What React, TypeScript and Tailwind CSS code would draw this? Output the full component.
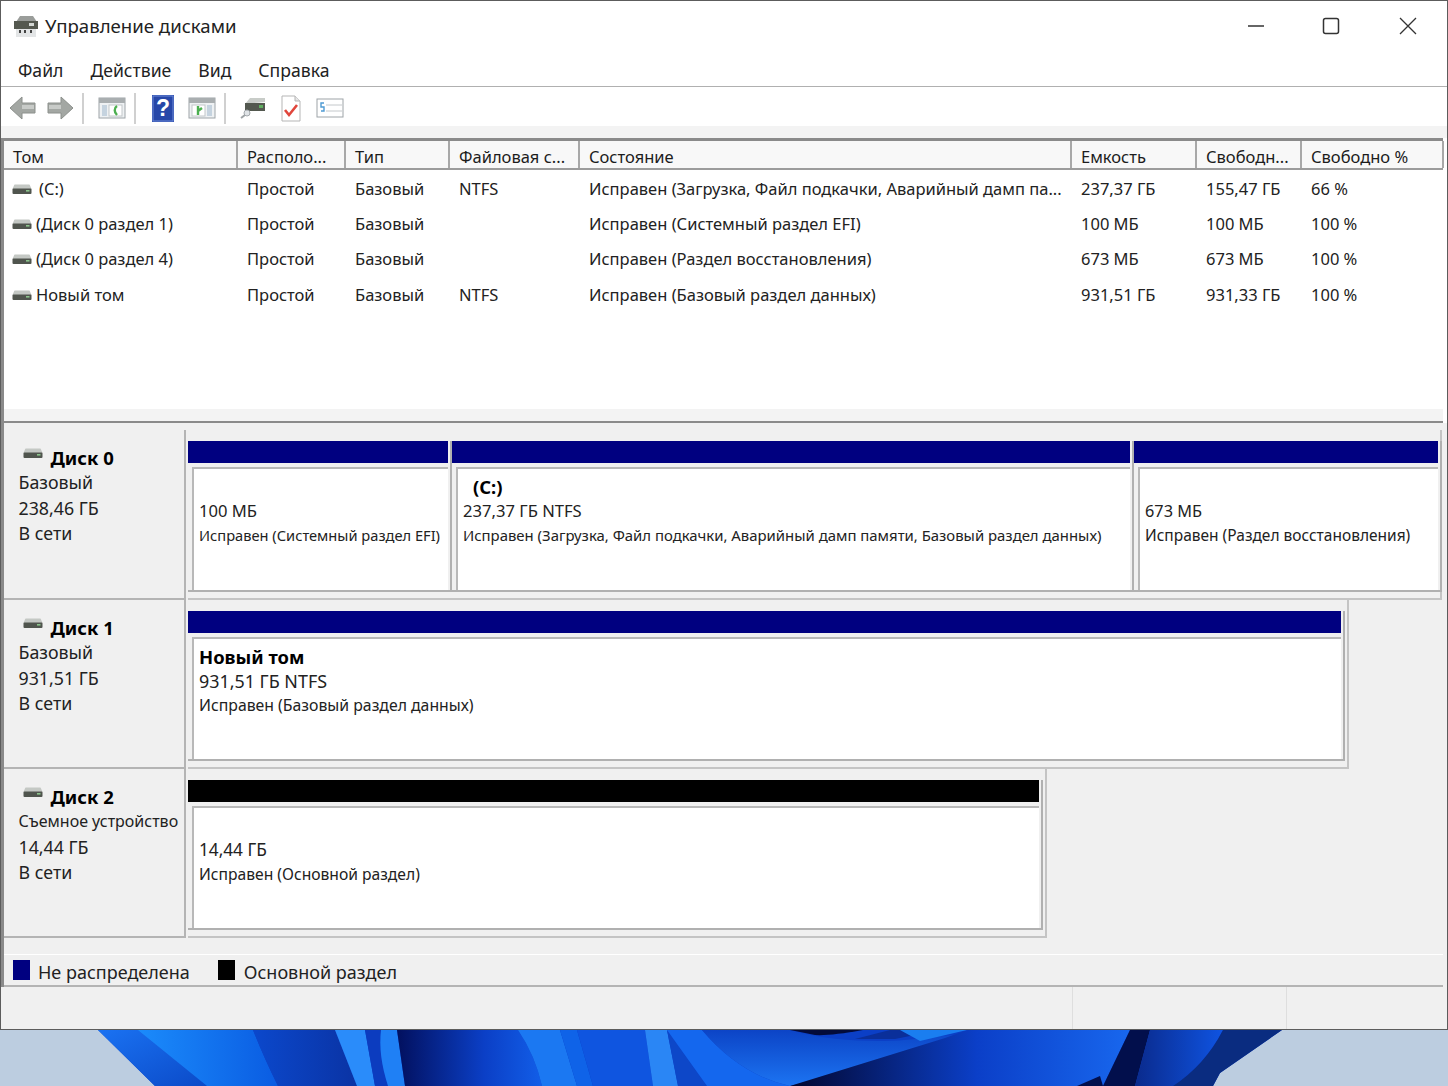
import type { ReactNode } from "react";

const columns = [
  { title: "Том", width: 234 },
  { title: "Располо...", width: 108 },
  { title: "Тип", width: 104 },
  { title: "Файловая с...", width: 130 },
  { title: "Состояние", width: 492 },
  { title: "Емкость", width: 125 },
  { title: "Свободн...", width: 105 },
  { title: "Свободно %", width: 142 },
];

const rows = [
  ["(C:)", "Простой", "Базовый", "NTFS", "Исправен (Загрузка, Файл подкачки, Аварийный дамп па...", "237,37 ГБ", "155,47 ГБ", "66 %"],
  ["(Диск 0 раздел 1)", "Простой", "Базовый", "", "Исправен (Системный раздел EFI)", "100 МБ", "100 МБ", "100 %"],
  ["(Диск 0 раздел 4)", "Простой", "Базовый", "", "Исправен (Раздел восстановления)", "673 МБ", "673 МБ", "100 %"],
  ["Новый том", "Простой", "Базовый", "NTFS", "Исправен (Базовый раздел данных)", "931,51 ГБ", "931,33 ГБ", "100 %"],
];

function DriveIcon() {
  return (
    <svg width="20" height="11" viewBox="0 0 20 11" className="shrink-0">
      <path d="M2 1.5Q2 .5 3 .5h14q1 0 1 1L19.5 5H.5z" fill="#c4c8c4" />
      <rect x=".5" y="4.5" width="19" height="5.5" rx="1" fill="#50554e" />
      <rect x="14" y="6" width="3.5" height="1.6" fill="#8cc48c" />
    </svg>
  );
}

function Separator({ className }: { className: string }) {
  return <div className={`h-[31px] w-[2px] bg-[#d0d0d0] ${className}`} />;
}

function Toolbar() {
  return (
    <div className="flex h-[39px] shrink-0 items-center bg-white pt-[3px] pl-[8px]">
      <svg width="27" height="24" viewBox="0 0 27 24">
        <path d="M1 12 13 1v6h13v10H13v6z" fill="#a3a7a3" stroke="#8c908c" strokeLinejoin="round" />
        <rect x="13" y="9" width="12" height="4" fill="#c8cbc8" />
      </svg>
      <svg width="27" height="24" viewBox="0 0 27 24" className="ml-[11px]">
        <path d="M26 12 14 1v6H1v10h13v6z" fill="#a3a7a3" stroke="#8c908c" strokeLinejoin="round" />
        <rect x="2" y="9" width="12" height="4" fill="#c8cbc8" />
      </svg>
      <Separator className="ml-[8px]" />
      <svg width="28" height="22" viewBox="0 0 28 22" className="ml-[14px]">
        <rect x="1" y="1" width="26" height="20" fill="#eef1f3" stroke="#9ea4a8" />
        <rect x="1" y="1" width="26" height="5" fill="#a9aeb0" />
        <rect x="4" y="8" width="5" height="11" fill="#c5d3df" />
        <rect x="11" y="8" width="13" height="11" fill="#fff" stroke="#c2c7ca" />
        <path d="M19 9c-3 2-3 6 0 9" fill="none" stroke="#4caf50" strokeWidth="2.4" />
      </svg>
      <Separator className="ml-[8px]" />
      <svg width="22" height="27" viewBox="0 0 22 27" className="ml-[16px]">
        <rect width="22" height="27" fill="#2747a8" />
        <rect x="1" y="1" width="20" height="25" fill="none" stroke="#6f8cd8" />
      </svg>
      <span className="-ml-[19px] w-[16px] text-center font-['Liberation_Sans',sans-serif] text-[23px] leading-[27px] font-bold text-white">?</span>
      <svg width="28" height="22" viewBox="0 0 28 22" className="ml-[17px]">
        <rect x="1" y="1" width="26" height="20" fill="#eef1f3" stroke="#9ea4a8" />
        <rect x="1" y="1" width="26" height="5" fill="#a9aeb0" />
        <rect x="4" y="8" width="13" height="11" fill="#fff" stroke="#c2c7ca" />
        <rect x="19" y="8" width="5" height="11" fill="#c5d3df" />
        <path d="M10 9v9M10 14l4-3" fill="none" stroke="#4caf50" strokeWidth="2.4" />
      </svg>
      <Separator className="ml-[8px]" />
      <svg width="26" height="22" viewBox="0 0 26 22" className="ml-[14px]">
        <path d="M5 7 10 1h15v4z" fill="#c8ccc8" />
        <rect x="5" y="6" width="20" height="8" fill="#53584f" />
        <rect x="19" y="8" width="4" height="3" fill="#5fae5f" />
        <circle cx="7" cy="16" r="3" fill="#dfe3e6" stroke="#a4a9ad" />
        <path d="M5 18 1 21" stroke="#9ea3a6" strokeWidth="2" />
      </svg>
      <svg width="20" height="27" viewBox="0 0 20 27" className="ml-[15px]">
        <path d="M1 1h13l5 5v20H1z" fill="#fff" stroke="#b5b5b5" />
        <path d="M14 1v5h5" fill="#e6e6e6" stroke="#b5b5b5" />
        <path d="m4 15 4 5 8-10" fill="none" stroke="#e0463c" strokeWidth="2.6" />
      </svg>
      <svg width="28" height="20" viewBox="0 0 28 20" className="ml-[15px]">
        <rect x="1" y="1" width="26" height="18" fill="#fff" stroke="#9ea4a8" />
        <path d="M10 7h16M10 13h16" stroke="#c4c8cb" />
        <path d="M8 5H5v4h3v4H5" fill="none" stroke="#4f9bd3" strokeWidth="1.4" />
      </svg>
    </div>
  );
}

function VolumeList() {
  return (
    <div className="mr-[4px] flex h-[285px] shrink-0 flex-col border-t-[3px] border-b-[2px] border-l-[3px] border-[#8a8a8a] bg-white">
      <div className="flex h-[29px] shrink-0 border-b-[2px] border-[#9c9c9c]">
        {columns.map((c) => (
          <div
            key={c.title}
            style={{ width: c.width }}
            className="shrink-0 border-r-[2px] border-[#a8a8a8] bg-[#f8f8f8] pt-[4px] pl-[9px] text-[16.5px] leading-[24px] whitespace-nowrap text-[#1c1c1c]"
          >
            {c.title}
          </div>
        ))}
      </div>
      <div className="flex-1 pt-[1.5px]">
        {rows.map((row, r) => (
          <div key={r} className="flex h-[35.3px] items-center">
            {row.map((cell, i) => (
              <div
                key={i}
                style={{ width: columns[i].width }}
                className={
                  i === 0
                    ? "flex shrink-0 items-center gap-[4px] pl-[8px] text-[16.5px] whitespace-nowrap text-[#222]"
                    : "shrink-0 pl-[9px] text-[16.5px] whitespace-nowrap text-[#222]"
                }
              >
                {i === 0 && <DriveIcon />}
                <span className={r === 0 && i === 0 ? "pl-[3px]" : ""}>{cell}</span>
              </div>
            ))}
          </div>
        ))}
      </div>
      <div className="h-[12px] shrink-0 bg-[#f3f3f3]" />
    </div>
  );
}

function DiskLabel({ name, type, size, typeClass = "" }: { name: string; type: string; size: string; typeClass?: string }) {
  return (
    <div className="h-full w-[182px] shrink-0 border-r-[2px] border-b-[2px] border-[#b4b4b4] bg-[#f0f0f0] pt-[15px] pl-[14.5px] text-[17.8px] leading-[25.3px] text-[#222]">
      <div className="flex items-center">
        <span className="-mt-[8px] ml-[4px]">
          <DriveIcon />
        </span>
        <span className="ml-[8px] text-[18.5px] font-bold text-black">{name}</span>
      </div>
      <div className={`whitespace-nowrap ${typeClass}`}>{type}</div>
      <div>{size}</div>
      <div>В сети</div>
    </div>
  );
}

function Partition({ width, color, children }: { width: number; color: string; children: ReactNode }) {
  return (
    <div style={{ width }} className="flex h-full shrink-0 flex-col border-r-[2px] border-b-[2px] border-[#b0b0b0] pr-[2px]">
      <div style={{ backgroundColor: color }} className="h-[22px] shrink-0" />
      <div className="mt-[4px] ml-[4px] flex-1 border-t-[2px] border-l-[2px] border-[#b8b8b8] bg-white pt-[6px] pl-[5px]">
        {children}
      </div>
    </div>
  );
}

function PartitionText({
  title,
  size,
  status,
  indent,
  sizeClass,
  statusClass,
}: {
  title?: string;
  size: string;
  status: string;
  indent?: boolean;
  sizeClass: string;
  statusClass: string;
}) {
  return (
    <div className="whitespace-nowrap text-[#222]">
      <div className={`h-[24px] text-[18.4px] leading-[23px] font-bold text-black ${indent ? "pl-[10px]" : ""}`}>{title}</div>
      <div className={`h-[24px] leading-[24px] ${sizeClass}`}>{size}</div>
      <div className={`leading-[24px] ${statusClass}`}>{status}</div>
    </div>
  );
}

function DiskRow({ label, height, children, width }: { label: ReactNode; height: number; children: ReactNode; width: number }) {
  return (
    <div style={{ height }} className="flex shrink-0">
      {label}
      <div className="pl-[2px]">
        <div style={{ width }} className="flex h-full border-r-[2px] border-b-[2px] border-[#c4c4c4] pt-[11px] pb-[6px]">
          {children}
        </div>
      </div>
    </div>
  );
}

function Wallpaper() {
  return (
    <svg viewBox="0 0 1448 56" width="1448" height="56" className="shrink-0">
      <defs>
        <linearGradient id="w1" x1="0" x2="1" y1="0" y2="1">
          <stop offset="0" stopColor="#1a72f2" />
          <stop offset="1" stopColor="#0b4ac8" />
        </linearGradient>
        <linearGradient id="w2" x1="0" x2="1">
          <stop offset="0" stopColor="#1b8bfb" />
          <stop offset="1" stopColor="#0a5ce2" />
        </linearGradient>
        <linearGradient id="w3" x1="0" x2="1">
          <stop offset="0" stopColor="#0b48cc" />
          <stop offset="1" stopColor="#0a33a4" />
        </linearGradient>
        <linearGradient id="w4" x1="0" x2="1">
          <stop offset="0" stopColor="#02105e" />
          <stop offset="0.6" stopColor="#0b3fc6" />
          <stop offset="1" stopColor="#125ee8" />
        </linearGradient>
        <linearGradient id="w5" x1="0" x2="0" y1="0" y2="1">
          <stop offset="0" stopColor="#0c44c6" />
          <stop offset="1" stopColor="#1c74f2" />
        </linearGradient>
        <linearGradient id="w6" x1="0" x2="1">
          <stop offset="0" stopColor="#02062e" />
          <stop offset="0.55" stopColor="#0b3fc8" />
          <stop offset="1" stopColor="#1867ee" />
        </linearGradient>
        <linearGradient id="w7" x1="0" x2="1">
          <stop offset="0" stopColor="#0a2a8c" />
          <stop offset="1" stopColor="#0f54e2" />
        </linearGradient>
      </defs>
      <path d="M98 0H1282L1220 43 1213 56H155Z" fill="#0b3fc6" />
      <path d="M98 0H140L207 56H155Z" fill="url(#w1)" />
      <path d="M138 0H253Q265 30 278 56H207Z" fill="url(#w2)" />
      <path d="M253 0H335L357 56H278Q265 30 253 0Z" fill="url(#w3)" />
      <path d="M335 0H365L375 56H357Z" fill="#2a8cfa" />
      <path d="M365 0H381Q378 25 388 56H375Z" fill="#0c3cbf" />
      <path d="M381 0H397L405 56H388Q378 25 381 0Z" fill="#1f80f5" />
      <path d="M397 0H518Q535 25 542 56H405Z" fill="url(#w4)" />
      <path d="M518 0H560L577 56H542Q535 25 518 0Z" fill="#1b78f2" />
      <path d="M560 0H577L593 56H577Z" fill="#0f63e8" />
      <path d="M577 0H645L653 56H593Z" fill="#0f55e0" />
      <path d="M645 0H667L678 56H653Z" fill="#2a86f5" />
      <path d="M667 0L707 56H678Z" fill="#0d47c8" />
      <path d="M667 0H702Q740 45 790 56H707Z" fill="#1467ee" />
      <path d="M702 0H790C830 12 880 12 905 10L1000 0V4L790 56Q740 45 702 0Z" fill="url(#w5)" />
      <path d="M790 0H863Q830 6 815 5Z" fill="#030b3a" />
      <path d="M855 9 890 0H940L895 9Z" fill="#0a2f9a" />
      <path d="M790 56 945 8 967 0H1130L1103 56Z" fill="url(#w6)" />
      <path d="M920 11 967 0H900Z" fill="#1a7ef0" />
      <path d="M1077 56 1100 46 1103 56Z" fill="#020f4c" />
      <path d="M1130 0H1150L1135 56H1103Z" fill="#020f4c" />
      <path d="M1150 0H1223Q1205 35 1173 56H1135Z" fill="url(#w7)" />
      <path d="M1223 0H1282L1220 43 1213 56H1173Q1205 35 1223 0Z" fill="#0a2c80" />
    </svg>
  );
}

export default function App() {
  return (
    <div className="flex h-[1086px] flex-col overflow-hidden bg-[#bccde0] font-['Noto_Sans',sans-serif]">
      <div className="flex h-[1030px] shrink-0 flex-col border-[1px] border-[#5c5c5c] bg-white">
        <div className="flex h-[51px] shrink-0 items-center pb-[2px] pl-[12px]">
          <svg width="26" height="24" viewBox="0 0 26 24">
            <path d="M3 8 7 2h13l4 6z" fill="#9a9d9a" />
            <rect x="1" y="7" width="24" height="8" fill="#54584f" />
            <rect x="16" y="9" width="5" height="3" fill="#d4d8d4" />
            <rect x="3" y="15" width="20" height="8" fill="#e3e5e6" />
            <path d="M7 16v3M12 16v3M18 16v3" stroke="#444" strokeWidth="2" />
          </svg>
          <span className="ml-[6px] text-[18.6px] text-[#222]">Управление дисками</span>
          <div className="ml-auto flex items-center pr-[30px]">
            <svg width="18" height="18" viewBox="0 0 18 18">
              <path d="M1 9h16" stroke="#333" strokeWidth="1.5" />
            </svg>
            <svg width="18" height="18" viewBox="0 0 18 18" className="ml-[57px]">
              <rect x="1.5" y="1.5" width="15" height="15" rx="2" fill="none" stroke="#333" strokeWidth="1.5" />
            </svg>
            <svg width="18" height="18" viewBox="0 0 18 18" className="ml-[59px]">
              <path d="m1 1 16 16M17 1 1 17" stroke="#333" strokeWidth="1.3" />
            </svg>
          </div>
        </div>
        <div className="flex h-[35px] shrink-0 items-center gap-[27px] border-b-[1px] border-[#b0b0b0] pt-[2px] pl-[17px] text-[17.6px] text-[#222]">
          <span>Файл</span>
          <span>Действие</span>
          <span>Вид</span>
          <span>Справка</span>
        </div>
        <Toolbar />
        <div className="h-[12px] shrink-0 bg-[#f3f3f3]" />
        <VolumeList />
        <div className="flex min-h-0 flex-1 flex-col border-l-[3px] border-[#8a8a8a] bg-[#f0f0f0]">
          <div className="h-[7px] shrink-0" />
          <DiskRow height={170} width={1254} label={<DiskLabel name="Диск 0" type="Базовый" size="238,46 ГБ" />}>
            <Partition width={264} color="#000080">
              <PartitionText size="100 МБ" sizeClass="text-[16.6px]" statusClass="text-[14.65px]" status="Исправен (Системный раздел EFI)" />
            </Partition>
            <Partition width={682} color="#000080">
              <PartitionText
                title="(C:)"
                indent
                size="237,37 ГБ NTFS"
                sizeClass="text-[16.6px]"
                statusClass="text-[14.9px]"
                status="Исправен (Загрузка, Файл подкачки, Аварийный дамп памяти, Базовый раздел данных)"
              />
            </Partition>
            <Partition width={308} color="#000080">
              <PartitionText size="673 МБ" sizeClass="text-[16.3px]" statusClass="text-[15.5px]" status="Исправен (Раздел восстановления)" />
            </Partition>
          </DiskRow>
          <DiskRow height={169} width={1161} label={<DiskLabel name="Диск 1" type="Базовый" size="931,51 ГБ" />}>
            <Partition width={1157} color="#000080">
              <PartitionText title="Новый том" size="931,51 ГБ NTFS" sizeClass="text-[17.9px]" statusClass="text-[15.8px]" status="Исправен (Базовый раздел данных)" />
            </Partition>
          </DiskRow>
          <DiskRow
            height={169}
            width={859}
            label={<DiskLabel name="Диск 2" type="Съемное устройство" typeClass="text-[16px]" size="14,44 ГБ" />}
          >
            <Partition width={855} color="#000000">
              <PartitionText size="14,44 ГБ" sizeClass="text-[17.2px]" statusClass="text-[15.65px]" status="Исправен (Основной раздел)" />
            </Partition>
          </DiskRow>
          <div className="h-[16px] shrink-0" />
          <div className="mr-[4px] flex h-[33px] shrink-0 items-center border-t-[1px] border-b-[2px] border-[#b4b4b4] border-t-white pt-[5px] pl-[9px] text-[18px] text-[#222]">
            <span className="-mt-[5px] h-[20px] w-[17px] bg-[#000080]" />
            <span className="ml-[8px]">Не распределена</span>
            <span className="-mt-[5px] ml-[28px] h-[20px] w-[17px] bg-black" />
            <span className="ml-[9px]">Основной раздел</span>
          </div>
          <div className="-ml-[3px] flex flex-1 bg-[#f0f0f0]">
            <div className="w-[1072px] border-r-[1px] border-[#dedede]" />
            <div className="w-[214px] border-r-[1px] border-[#dedede]" />
          </div>
        </div>
      </div>
      <Wallpaper />
    </div>
  );
}
